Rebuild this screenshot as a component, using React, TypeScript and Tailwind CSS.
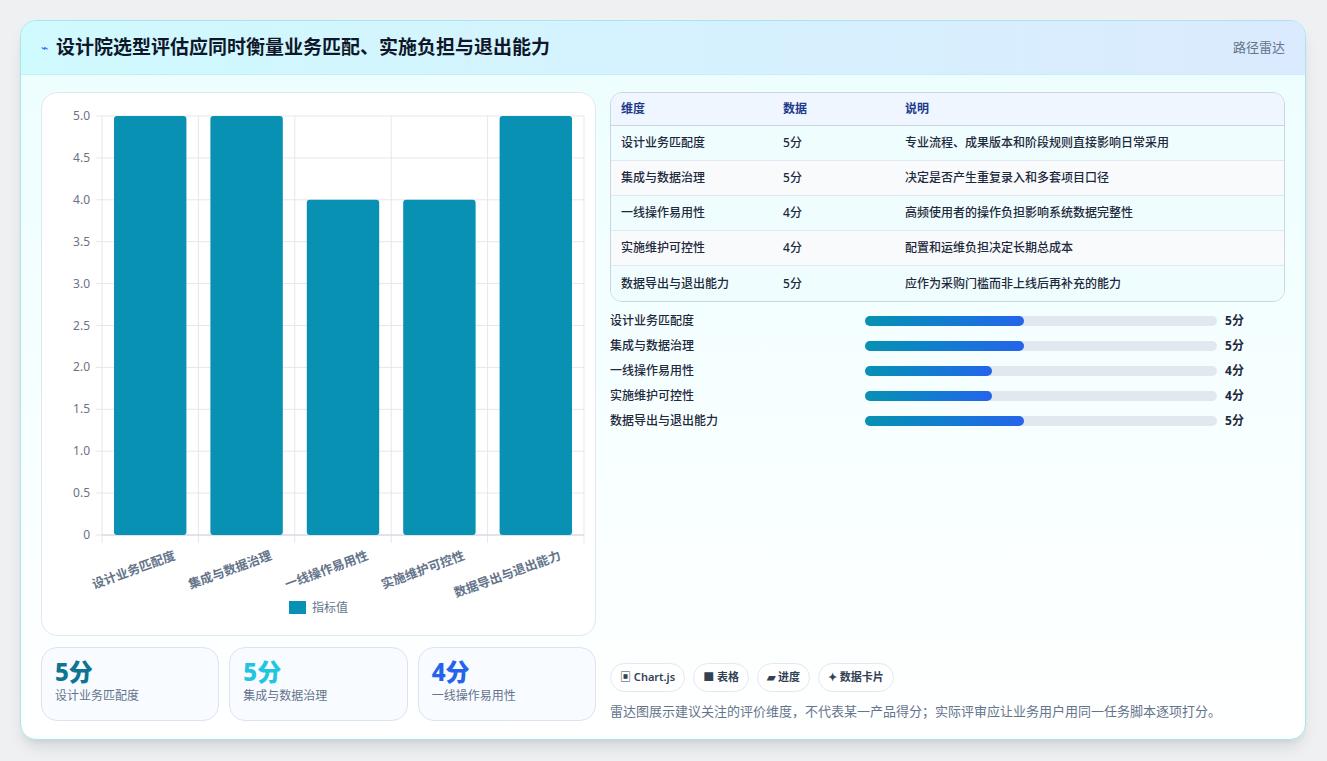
const rows = [
  { name: "设计业务匹配度", score: 5, note: "专业流程、成果版本和阶段规则直接影响日常采用" },
  { name: "集成与数据治理", score: 5, note: "决定是否产生重复录入和多套项目口径" },
  { name: "一线操作易用性", score: 4, note: "高频使用者的操作负担影响系统数据完整性" },
  { name: "实施维护可控性", score: 4, note: "配置和运维负担决定长期总成本" },
  { name: "数据导出与退出能力", score: 5, note: "应作为采购门槛而非上线后再补充的能力" },
];

function BarChart() {
  const left = 60, right = 542, top = 23, bottom = 442;
  const h = bottom - top;
  const step = (right - left) / 5;
  const ticks = [0, 0.5, 1, 1.5, 2, 2.5, 3, 3.5, 4, 4.5, 5];
  return (
    <svg width="555" height="543" className="block">
      {ticks.map((t) => {
        const y = bottom - (t / 5) * h;
        return (
          <g key={t}>
            <line x1={left - 6} x2={right} y1={y} y2={y} stroke="#e5e7eb" />
            <text x={left - 12} y={y + 4} textAnchor="end" fontSize="12" fill="#6b7280">
              {t === 0 ? "0" : t.toFixed(1)}
            </text>
          </g>
        );
      })}
      {[0, 1, 2, 3, 4, 5].map((i) => (
        <line key={i} x1={left + i * step} x2={left + i * step} y1={top} y2={bottom + 8} stroke="#e5e7eb" />
      ))}
      <line x1={left} x2={right} y1={bottom} y2={bottom} stroke="#cbd5e1" />
      {rows.map((r, i) => {
        const x = left + i * step + 12;
        const y = bottom - (r.score / 5) * h;
        return <rect key={r.name} x={x} y={y} width={step - 24} height={bottom - y} rx="3" fill="#0891b2" />;
      })}
      {rows.map((r, i) => {
        const cx = left + i * step + step / 2 + 26;
        return (
          <text key={r.name} x={cx} y={bottom + 24} textAnchor="end" fontSize="12.5" fontWeight="600" fill="#64748b" transform={`rotate(-20 ${cx} ${bottom + 24})`}>
            {r.name}
          </text>
        );
      })}
      <rect x="247" y="508" width="17" height="13" fill="#0891b2" />
      <text x="270" y="519" fontSize="12" fill="#64748b">指标值</text>
    </svg>
  );
}

export default function App() {
  const kpi = [
    { v: "5分", c: "text-[#0e7490]", l: "设计业务匹配度" },
    { v: "5分", c: "text-[#22c5e0]", l: "集成与数据治理" },
    { v: "4分", c: "text-[#2563eb]", l: "一线操作易用性" },
  ];
  return (
    <div className="min-h-[761px] bg-[#eef0f2] pt-5 pl-5 pr-[21px] pb-5" style={{ fontFamily: '"Noto Sans", "Noto Sans CJK SC", sans-serif' }}>
      <div className="flex h-[720px] flex-col overflow-hidden rounded-2xl border border-[#a5e6f0] bg-gradient-to-b from-[#ecfeff] to-white shadow-lg">
        <div className="flex h-[55px] items-center justify-between border-b border-[#c6eef5] bg-gradient-to-r from-[#cffafe] to-[#dbeafe] px-5">
          <div className="flex items-center gap-2">
            <span className="text-xs text-[#2563eb]">⌁</span>
            <h1 className="text-[19px] font-bold text-[#0f172a]">设计院选型评估应同时衡量业务匹配、实施负担与退出能力</h1>
          </div>
          <span className="text-[13px] text-[#64748b]">路径雷达</span>
        </div>
        <div className="flex flex-1 gap-[14px] px-5 pt-[17px] pb-[18px]">
          <div className="flex w-[555px] flex-col gap-[11px]">
            <div className="h-[544px] rounded-2xl border border-[#e2e8f0] bg-white">
              <BarChart />
            </div>
            <div className="flex gap-[10px]">
              {kpi.map((k) => (
                <div key={k.l} className="h-[74px] flex-1 rounded-2xl border border-[#dbe4f0] bg-[#f8fbff] px-[13px] pt-2">
                  <div className={`text-[24px] font-extrabold leading-8 ${k.c}`}>{k.v}</div>
                  <div className="text-xs text-[#64748b]">{k.l}</div>
                </div>
              ))}
            </div>
          </div>
          <div className="flex flex-1 flex-col">
            <div className="overflow-hidden rounded-xl border border-[#cbd5e1] text-xs text-[#1e293b]">
              <div className="flex h-[33px] items-center border-b border-[#cbd5e1] bg-[#eff6ff] px-[10px] font-semibold text-[#1e3a8a]">
                <span className="w-[162px]">维度</span>
                <span className="w-[122px]">数据</span>
                <span>说明</span>
              </div>
              {rows.map((r, i) => (
                <div key={r.name} className={`flex h-[35px] items-center px-[10px] ${i < 4 ? "border-b border-[#e2e8f0]" : ""} ${i % 2 ? "bg-[#f8fafc]" : "bg-[#f0fdff]"}`}>
                  <span className="w-[162px] font-medium">{r.name}</span>
                  <span className="w-[122px] font-medium">{r.score}分</span>
                  <span className="font-medium">{r.note}</span>
                </div>
              ))}
            </div>
            <div className="mt-[11px] flex flex-col gap-[9px]">
              {rows.map((r) => (
                <div key={r.name} className="flex h-4 items-center text-xs font-medium text-[#1e293b]">
                  <span className="w-[255px]">{r.name}</span>
                  <div className="h-[10px] w-[352px] rounded-full bg-[#e2e8f0]">
                    <div className={`h-full rounded-full bg-gradient-to-r from-[#0891b2] to-[#2563eb] ${r.score === 5 ? "w-[159px]" : "w-[127px]"}`} />
                  </div>
                  <span className="ml-2 font-bold">{r.score}分</span>
                </div>
              ))}
            </div>
            <div className="mt-auto flex gap-2 text-[11px] font-semibold text-[#334155]">
              {["▣ Chart.js", "■ 表格", "▰ 进度", "✦ 数据卡片"].map((c) => (
                <span key={c} className="flex h-[29px] items-center rounded-full border border-[#e2e8f0] bg-white px-[9px]">{c}</span>
              ))}
            </div>
            <p className="mt-[10px] text-[13px] text-[#64748b]">雷达图展示建议关注的评价维度，不代表某一产品得分；实际评审应让业务用户用同一任务脚本逐项打分。</p>
          </div>
        </div>
      </div>
    </div>
  );
}
